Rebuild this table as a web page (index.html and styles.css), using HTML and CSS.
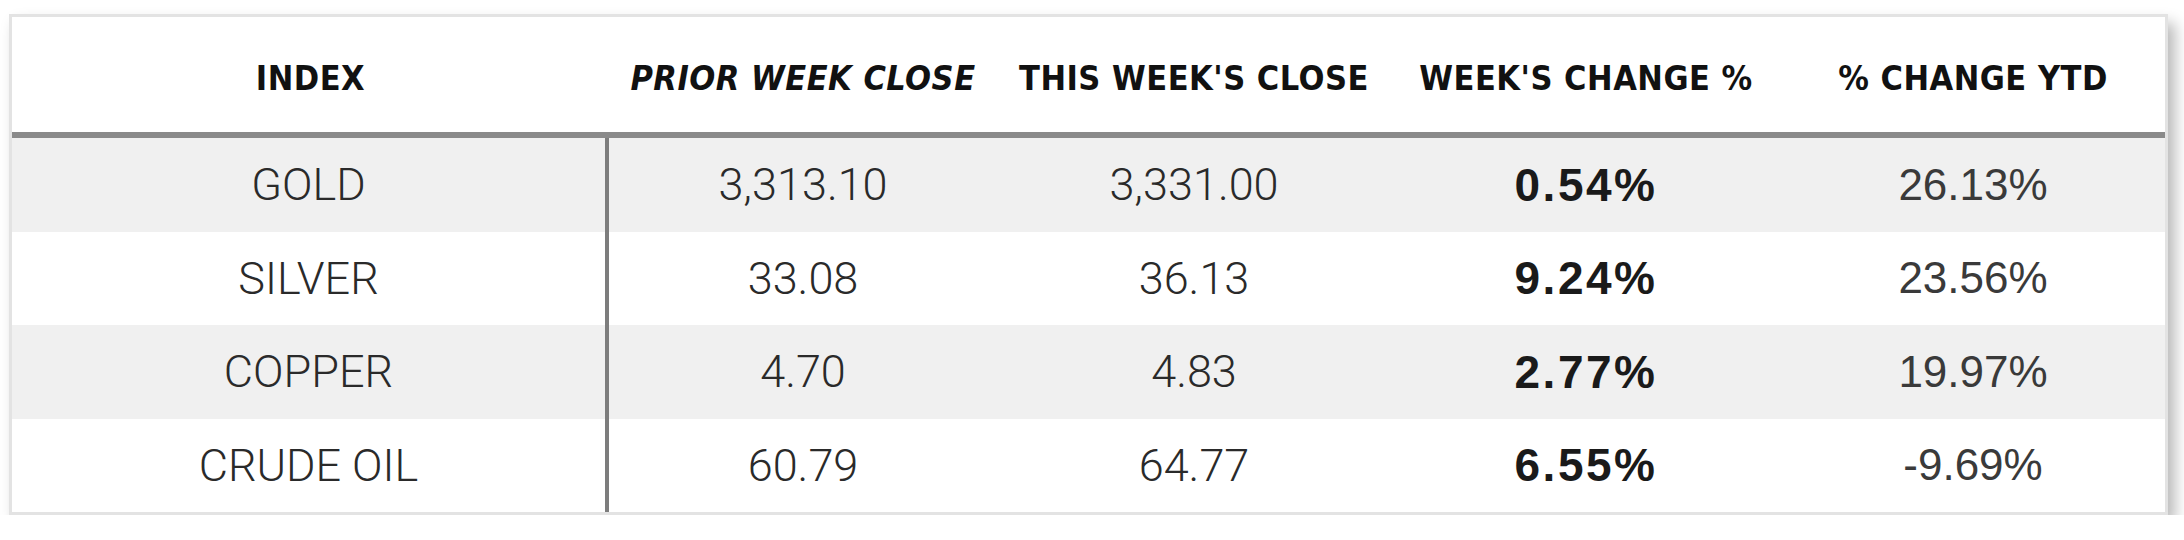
FILE: index.html
```html
<!DOCTYPE html>
<html lang="en">
<head>
<meta charset="utf-8">
<title>Weekly metals and oil</title>
<link rel="stylesheet" href="styles.css">
</head>
<body>
<div class="card">
  <div class="row head">
    <div class="cell">INDEX</div>
    <div class="cell italic">PRIOR WEEK CLOSE</div>
    <div class="cell">THIS WEEK'S CLOSE</div>
    <div class="cell">WEEK'S CHANGE %</div>
    <div class="cell">% CHANGE YTD</div>
  </div>
  <div class="body">
    <div class="row shade">
      <div class="cell name">GOLD</div>
      <div class="cell">3,313.10</div>
      <div class="cell">3,331.00</div>
      <div class="cell strong">0.54%</div>
      <div class="cell ytd">26.13%</div>
    </div>
    <div class="row">
      <div class="cell name">SILVER</div>
      <div class="cell">33.08</div>
      <div class="cell">36.13</div>
      <div class="cell strong">9.24%</div>
      <div class="cell ytd">23.56%</div>
    </div>
    <div class="row shade">
      <div class="cell name">COPPER</div>
      <div class="cell">4.70</div>
      <div class="cell">4.83</div>
      <div class="cell strong">2.77%</div>
      <div class="cell ytd">19.97%</div>
    </div>
    <div class="row">
      <div class="cell name">CRUDE OIL</div>
      <div class="cell">60.79</div>
      <div class="cell">64.77</div>
      <div class="cell strong">6.55%</div>
      <div class="cell ytd">-9.69%</div>
    </div>
  </div>
</div>
</body>
</html>
```
FILE: styles.css
```css
html, body {
  margin: 0;
  padding: 0;
  background: #ffffff;
}

body {
  padding: 14px 0 0 9px;
}

.card {
  box-sizing: border-box;
  width: 2159px;
  height: 501px;
  border: 3px solid #e3e3e3;
  background: #ffffff;
  box-shadow: 7px 9px 14px rgba(0, 0, 0, 0.28);
  display: flex;
  flex-direction: column;
}

.row {
  display: grid;
  grid-template-columns: 597px 388px 394px 390px 1fr;
  align-items: stretch;
}

.cell {
  display: flex;
  align-items: center;
  justify-content: center;
  white-space: nowrap;
}

.head {
  height: 115px;
  border-bottom: 6px solid #8a8a8a;
  font-family: "DejaVu Sans Condensed", "DejaVu Sans", sans-serif;
  font-stretch: condensed;
  font-weight: bold;
  font-size: 34px;
  letter-spacing: 0.5px;
  color: #111111;
}

.head .cell {
  padding-top: 6px;
}

.head .italic {
  font-style: italic;
}

.body {
  display: flex;
  flex-direction: column;
  flex: 1;
}

.body .row {
  flex: 1;
  font-family: Roboto, "Liberation Sans", sans-serif;
  font-weight: 300;
  font-size: 45px;
  color: #2a2a2a;
}

.body .row.shade {
  background: #f0f0f0;
}

.body .name {
  border-right: 4px solid #7d7d7d;
}

.body .strong {
  font-family: "Liberation Sans", Arial, sans-serif;
  font-weight: bold;
  font-size: 46px;
  letter-spacing: 2.5px;
  color: #1a1a1a;
}

.body .ytd {
  font-family: "Liberation Sans", Arial, sans-serif;
  font-weight: normal;
  font-size: 44px;
  color: #3a3a3a;
}
```
